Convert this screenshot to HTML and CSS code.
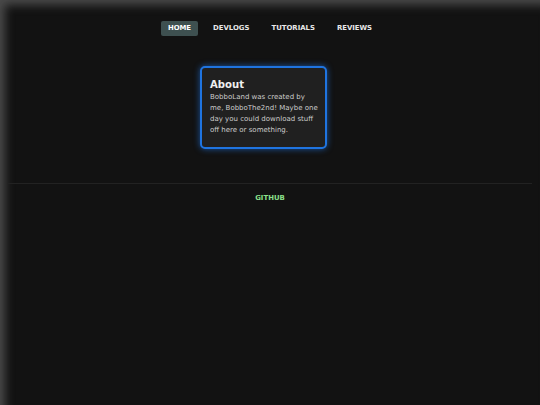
FILE: index.html
```html
<!DOCTYPE html>
<html lang="en">
<head>
  <meta charset="UTF-8" />
  <meta name="viewport" content="width=device-width, initial-scale=1" />
  <title>BobboLand</title>
  <link rel="stylesheet" href="styles.css">
</head>
<body>

  <nav class="topnav">
    <a href="#" class="active">Home</a>
    <a href="#">Devlogs</a>
    <a href="#">Tutorials</a>
    <a href="#">Reviews</a>
  </nav>

  <main>
    <section class="card">
      <h2>About</h2>
      <p>BobboLand was created by<br>me, BobboThe2nd! Maybe one<br>day you could download stuff<br>off here or something.</p>
    </section>
  </main>

  <footer>
    <a href="#">Github</a>
  </footer>

</body>
</html>
```

FILE: styles.css
```css
:root {
  --bg: #121212;
  --card-bg: #202020;
  --text: #e6e6e6;
  --muted: #cccccc;
  --accent: #1f74e0;
  --green: #8be08b;
}

* {
  box-sizing: border-box;
}

html, body {
  height: 100%;
}

body {
  margin: 0;
  background: var(--bg);
  color: var(--text);
  font-family: "DejaVu Sans", Verdana, sans-serif;
  box-shadow: inset 7px 7px 10px -2px rgba(120, 120, 120, 0.55);
}

.topnav {
  display: flex;
  justify-content: center;
  gap: 9px;
  padding-top: 21px;
  font-size: 6.9px;
  line-height: 15px;
}

.topnav a {
  color: #e8e8e8;
  text-decoration: none;
  text-transform: uppercase;
  font-weight: 700;
  padding: 0 6.5px;
  border-radius: 2px;
}

.topnav a.active {
  background: #3e5050;
  color: #ffffff;
}

main {
  display: flex;
  justify-content: center;
  padding: 30px 8px 34px;
  border-bottom: 1px solid #222;
  margin: 0 8px;
}

.card {
  width: 127px;
  margin-right: 13px;
  background: var(--card-bg);
  border: 2px solid var(--accent);
  border-radius: 5px;
  padding: 10px 4px 11px 8px;
  box-shadow: 0 0 6px rgba(31, 116, 224, 0.7);
}

.card h2 {
  margin: 0;
  font-size: 10.1px;
  line-height: 14px;
  font-weight: 700;
  color: #f0f0f0;
}

.card p {
  margin: 0;
  font-size: 7px;
  line-height: 11px;
  color: var(--muted);
  white-space: nowrap;
}

footer {
  text-align: center;
  padding-top: 9px;
  font-size: 6.9px;
  line-height: 10px;
}

footer a {
  color: var(--green);
  text-decoration: none;
  text-transform: uppercase;
  font-weight: 700;
}
```
